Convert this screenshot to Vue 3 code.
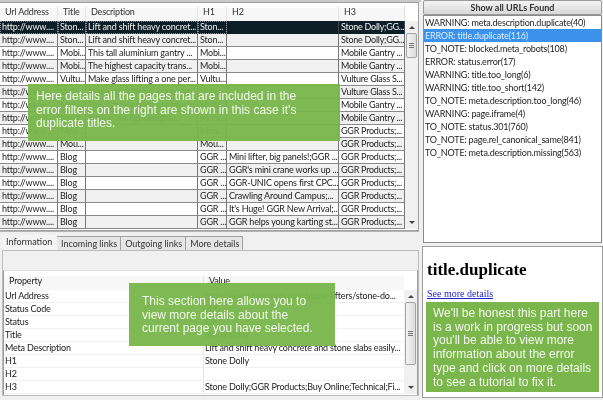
<script setup>
const rows = [
  ['http://www....', 'Ston...', 'Lift and shift heavy concret...', 'Ston...', '', 'Stone Dolly;GG...'],
  ['http://www....', 'Ston...', 'Lift and shift heavy concret...', 'Ston...', '', 'Stone Dolly;GG...'],
  ['http://www....', 'Mobi...', 'This tall aluminium gantry ...', 'Mobi...', '', 'Mobile Gantry ...'],
  ['http://www....', 'Mobi...', 'The highest capacity trans...', 'Mobi...', '', 'Mobile Gantry ...'],
  ['http://www....', 'Vultu...', 'Make glass lifting a one per...', 'Vultu...', '', 'Vulture Glass S...'],
  ['http://www....', 'Vultu...', 'Make glass lifting a one per...', 'Vultu...', '', 'Vulture Glass S...'],
  ['http://www....', 'Mobi...', 'This light weight aluminium ...', 'Mobi...', '', 'Mobile Gantry ...'],
  ['http://www....', 'Mobi...', 'Strong but lightweight ...', 'Mobi...', '', 'Mobile Gantry ...'],
  ['http://www....', 'Mou...', '', 'Mou...', '', 'GGR Products;...'],
  ['http://www....', 'Mou...', '', 'Mou...', '', 'GGR Products;...'],
  ['http://www....', 'Blog', '', 'GGR ...', 'Mini lifter, big panels!;GGR ...', 'GGR Products;...'],
  ['http://www....', 'Blog', '', 'GGR ...', "GGR's mini crane works up ...", 'GGR Products;...'],
  ['http://www....', 'Blog', '', 'GGR ...', 'GGR-UNIC opens first CPC...', 'GGR Products;...'],
  ['http://www....', 'Blog', '', 'GGR ...', 'Crawling Around Campus;...', 'GGR Products;...'],
  ['http://www....', 'Blog', '', 'GGR ...', "It's Huge! GGR New Arrival;...", 'GGR Products;...'],
  ['http://www....', 'Blog', '', 'GGR ...', 'GGR helps young karting st...', 'GGR Products;...'],
]
const headers = ['Url Address', 'Title', 'Description', 'H1', 'H2', 'H3']
const tabs = ['Information', 'Incoming links', 'Outgoing links', 'More details']
const props = [
  ['Url Address', 'http://www.ggrgroup.com/stone-lifters/stone-do...'],
  ['Status Code', '200'],
  ['Status', 'OK'],
  ['Title', 'Stone Dolly'],
  ['Meta Description', 'Lift and shift heavy concrete and stone slabs easily...'],
  ['H1', 'Stone Dolly'],
  ['H2', ''],
  ['H3', 'Stone Dolly;GGR Products;Buy Online;Technical;Fi...'],
]
const filters = [
  'WARNING: meta.description.duplicate(40)',
  'ERROR: title.duplicate(116)',
  'TO_NOTE: blocked.meta_robots(108)',
  'ERROR: status.error(17)',
  'WARNING: title.too_long(6)',
  'WARNING: title.too_short(142)',
  'TO_NOTE: meta.description.too_long(46)',
  'WARNING: page.iframe(4)',
  'TO_NOTE: status.301(760)',
  'TO_NOTE: page.rel_canonical_same(841)',
  'TO_NOTE: meta.description.missing(563)',
]
</script>

<template>
  <div class="app">
    <div class="left">
      <section class="results">
        <div class="grid-wrap">
          <div class="grid-row head">
            <div v-for="h in headers" :key="h" class="cell">{{ h }}</div>
          </div>
          <div
            v-for="(r, i) in rows"
            :key="i"
            class="grid-row body"
            :class="{ selected: i === 0, alt: i % 2 === 1 }"
          >
            <div v-for="(c, j) in r" :key="j" class="cell">{{ c }}</div>
          </div>
        </div>
        <div class="scroll results-scroll">
          <span class="arrow up"></span>
          <span class="thumb"><i></i></span>
          <span class="arrow down"></span>
        </div>
        <div class="note note-top">
          Here details all the pages that are included in the error filters on the right are shown in this case it's duplicate titles.
        </div>
      </section>

      <section class="details">
        <div class="tabs">
          <div v-for="(t, i) in tabs" :key="t" class="tab" :class="{ active: i === 0 }">{{ t }}</div>
        </div>
        <div class="tab-panel">
          <div class="prop-table">
            <div class="prop-main">
              <div class="prop-row prop-head">
                <div class="pcell">Property</div>
                <div class="pcell">Value</div>
              </div>
              <div v-for="p in props" :key="p[0]" class="prop-row">
                <div class="pcell">{{ p[0] }}</div>
                <div class="pcell">{{ p[1] }}</div>
              </div>
            </div>
            <div class="scroll prop-scroll">
              <span class="arrow up"></span>
              <span class="thumb"><i></i></span>
              <span class="arrow down"></span>
            </div>
          </div>
        </div>
        <div class="note note-bottom">
          This section here allows you to view more details about the current page you have selected.
        </div>
      </section>
    </div>

    <div class="right">
      <button class="show-all">Show all URLs Found</button>
      <ul class="filters">
        <li v-for="(f, i) in filters" :key="f" :class="{ picked: i === 1 }">{{ f }}</li>
      </ul>
      <div class="info">
        <h1>title.duplicate</h1>
        <a class="more">See more details</a>
        <div class="note-side">
          We'll be honest this part here is a work in progress but soon you'll be able to view more information about the error type and click on more details to see a tutorial to fix it.
        </div>
      </div>
    </div>
  </div>
</template>

<style>
html, body { margin: 0; background: #f0f0f0; }
</style>

<style scoped>
.app {
  width: 603px;
  height: 400px;
  overflow: hidden;
  display: flex;
  background: #f0f0f0;
  font-family: Lato, "Noto Sans", sans-serif;
  font-size: 9px;
  letter-spacing: -0.18px;
  color: #222;
  filter: blur(0.35px);
}
.left {
  width: 421px;
  flex: none;
  display: flex;
  flex-direction: column;
  border-top: 2px solid #c8c8c8;
  box-sizing: border-box;
}

/* results */
.results {
  position: relative;
  height: 229px;
  flex: none;
  margin: 0 2px 0 0;
  border: 1px solid #a0a0a0;
  border-left: 0;
  background: #fff;
  display: flex;
  box-sizing: border-box;
  padding-top: 3px;
}
.grid-wrap { width: 405px; flex: none; }
.grid-row {
  display: grid;
  grid-template-columns: 58px 28px 112px 29px 112px 66px;
  height: 13px;
  box-sizing: border-box;
}
.cell {
  padding-left: 2px;
  line-height: 12px;
  white-space: nowrap;
  overflow: hidden;
  border-right: 1px solid #777;
  border-bottom: 1px solid #8a8a8a;
  box-sizing: border-box;
}
.head { height: 15px; background: linear-gradient(#fff 2px, #f7f7f7 2px); }
.head .cell {
  padding-left: 5px;
  line-height: 12px;
  border-right: 1px solid #e2e2e2;
  border-bottom: 0;
  color: #333;
}
.body { background: #fff; }
.alt { background: #f0f0f0; }
.selected { background: #0e1e26; color: #eef2f2; }
.selected .cell { border-right-color: #3a474d; border-bottom-color: #0e1e26; }
.selected .cell:nth-child(-n+4) { outline: 1px dotted #889; outline-offset: -1px; }
.body .cell:last-child { letter-spacing: -0.25px; padding-left: 2px; }

/* scrollbars */
.scroll {
  width: 13px;
  flex: none;
  background: #f0f0f0;
  position: relative;
  display: flex;
  flex-direction: column;
  align-items: center;
  justify-content: space-between;
  box-sizing: border-box;
}
.results-scroll { height: 208px; margin-top: 15px; padding: 5px 0; }
.prop-scroll { height: 104px; margin-top: 19px; padding: 5px 0; }
.arrow { width: 0; height: 0; border-left: 3px solid transparent; border-right: 3px solid transparent; }
.arrow.up { border-bottom: 3px solid #444; }
.arrow.down { border-top: 3px solid #444; }
.thumb {
  position: absolute;
  left: 1px;
  width: 11px;
  background: linear-gradient(90deg, #f4f4f4, #dcdcdc);
  border: 1px solid #a4a4a4;
  border-radius: 2px;
  display: flex;
  align-items: center;
  justify-content: center;
  box-sizing: border-box;
}
.results-scroll .thumb { top: 12px; height: 25px; }
.prop-scroll .thumb { top: 12px; height: 63px; }
.thumb i {
  display: block;
  width: 5px;
  height: 5px;
  background: repeating-linear-gradient(#777 0 1px, transparent 1px 2px);
}

/* details */
.details {
  position: relative;
  flex: 1;
  min-height: 0;
  padding-top: 3px;
  border-top: 1px solid #b4b4b4;
  margin-right: 2px;
}
.tabs { display: flex; padding-left: 2px; height: 15px; }
.tab {
  padding: 0 3px 0 4px;
  line-height: 14px;
  background: #e6e6e6;
  border: 1px solid #a0a0a0;
  border-left: 0;
  border-bottom: 0;
  margin-top: 1px;
  color: #333;
  letter-spacing: 0;
}
.tab.active {
  background: #f4f4f4;
  border: 0;
  margin-top: 0;
  padding: 0 5px 0 4px;
  width: 46px;
  box-sizing: content-box;
}
.tab-panel {
  height: 146px;
  margin: 0 0 0 2px;
  border: 1px solid #bcbcbc;
  background: #f0f0f0;
  box-sizing: border-box;
  padding-top: 19px;
}
.prop-table {
  display: flex;
  height: 125px;
  border: 1px solid #9c9c9c;
  border-bottom: 0;
  border-top-color: #e0e0e0;
  background: #fff;
  box-sizing: border-box;
}
.prop-main { flex: 1; min-width: 0; }
.prop-row {
  display: grid;
  grid-template-columns: 200px 1fr;
  height: 13px;
  box-sizing: border-box;
  border-bottom: 1px solid #f0f0f0;
}
.prop-head {
  height: 19px;
  padding-top: 4px;
  background: linear-gradient(#fff 5px, #f7f7f7 5px);
  border-bottom: 0;
}
.prop-head .pcell { padding-left: 5px; }
.pcell { padding-left: 1px; line-height: 12px; white-space: nowrap; overflow: hidden; }
.pcell:first-child { border-right: 1px solid #e4e4e4; }

/* green overlays */
.note {
  position: absolute;
  box-sizing: border-box;
  background: rgba(122, 182, 76, 0.96);
  color: #f2f8ec;
  font-family: "Liberation Sans", Arial, sans-serif;
  font-size: 12px;
  letter-spacing: 0;
  line-height: 13.7px;
}
.note-top {
  left: 28px;
  top: 81px;
  width: 312px;
  height: 57px;
  padding: 6px 30px 6px 8px;
}
.note-bottom {
  left: 129px;
  top: 51px;
  width: 206px;
  height: 63px;
  padding: 12px 13px;
}

/* right column */
.right {
  flex: 1;
  min-width: 0;
  display: flex;
  flex-direction: column;
  padding: 0 1px 0 2px;
}
.show-all {
  height: 15px;
  flex: none;
  padding: 0;
  border: 1px solid #9a9a9a;
  border-radius: 2px;
  background: linear-gradient(#f4f4f4, #d8d8d8);
  font: 700 9px/12px Lato, "Noto Sans", sans-serif;
  color: #333;
}
.filters {
  list-style: none;
  margin: 0;
  padding: 0;
  height: 228px;
  flex: none;
  box-sizing: border-box;
  background: #fff;
  border: 1px solid #8c8c8c;
}
.filters li { height: 13px; line-height: 13px; padding-left: 1px; white-space: nowrap; color: #1e1e1e; }
.filters li.picked { background: #3b92ec; color: #d9ecff; }
.info {
  margin-top: 3px;
  margin-left: -1px;
  margin-right: -1px;
  height: 152px;
  flex: none;
  box-sizing: border-box;
  background: #fff;
  border: 1px solid #9c9c9c;
  padding: 13px 3px 0;
  display: flex;
  flex-direction: column;
  letter-spacing: 0;
}
h1 {
  margin: 0 0 0 1px;
  font: bold 17px/20px "Liberation Serif", "Times New Roman", serif;
  color: #000;
}
.more {
  margin: 8px 0 0 1px;
  font: 10px/12px "Liberation Serif", "Times New Roman", serif;
  color: #2222cc;
  text-decoration: underline;
}
.note-side {
  margin-top: 2px;
  height: 90px;
  box-sizing: border-box;
  padding: 5px 2px 5px 7px;
  background: #7ab64c;
  color: #f4f9ef;
  font-family: "Liberation Sans", Arial, sans-serif;
  font-size: 12px;
  line-height: 13.7px;
}
</style>
